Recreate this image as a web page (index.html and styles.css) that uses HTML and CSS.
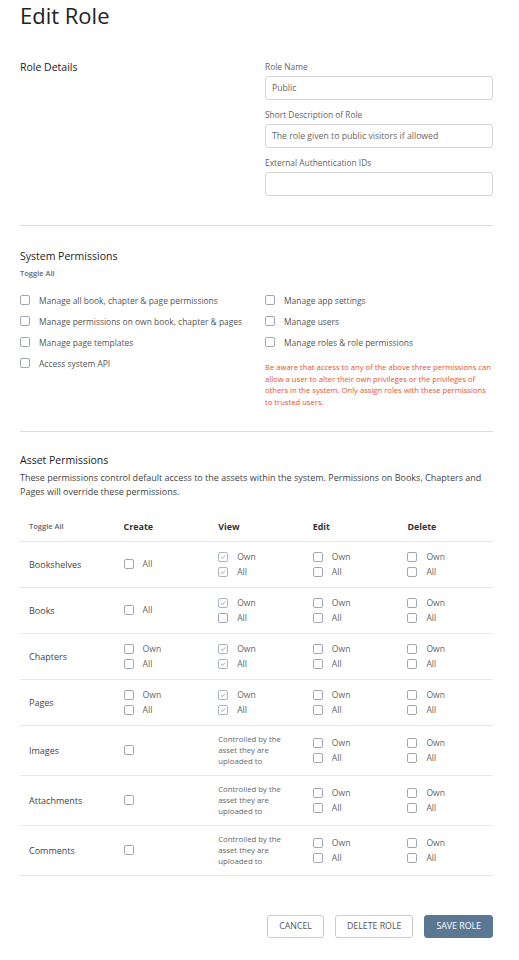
FILE: index.html
```html
<!DOCTYPE html>
<html lang="en">
<head>
<meta charset="utf-8">
<title>Edit Role</title>
<link rel="stylesheet" href="styles.css">
</head>
<body>
<main class="page">
  <h1 class="page-title">Edit Role</h1>

  <section class="two-col details">
    <div><h2 class="section-title">Role Details</h2></div>
    <div class="fields">
      <div class="field">
        <label class="field-label">Role Name</label>
        <input class="input" type="text" value="Public">
      </div>
      <div class="field">
        <label class="field-label">Short Description of Role</label>
        <input class="input" type="text" value="The role given to public visitors if allowed">
      </div>
      <div class="field">
        <label class="field-label">External Authentication IDs</label>
        <input class="input" type="text" value="">
      </div>
    </div>
  </section>

  <hr class="divider divider-first">

  <section class="system">
    <h2 class="section-title">System Permissions</h2>
    <div class="toggle-all">Toggle All</div>
    <div class="two-col sys-grid">
      <div class="sys-list">
        <div class="check sys-check"><span class="cb"></span><span>Manage all book, chapter &amp; page permissions</span></div>
        <div class="check sys-check"><span class="cb"></span><span>Manage permissions on own book, chapter &amp; pages</span></div>
        <div class="check sys-check"><span class="cb"></span><span>Manage page templates</span></div>
        <div class="check sys-check"><span class="cb"></span><span>Access system API</span></div>
      </div>
      <div class="sys-list">
        <div class="check sys-check"><span class="cb"></span><span>Manage app settings</span></div>
        <div class="check sys-check"><span class="cb"></span><span>Manage users</span></div>
        <div class="check sys-check"><span class="cb"></span><span>Manage roles &amp; role permissions</span></div>
        <p class="warning">Be aware that access to any of the above three permissions can allow a user to alter their own privileges or the privileges of others in the system. Only assign roles with these permissions to trusted users.</p>
      </div>
    </div>
  </section>

  <hr class="divider divider-second">

  <section class="assets">
    <h2 class="section-title">Asset Permissions</h2>
    <p class="assets-desc">These permissions control default access to the assets within the system. Permissions on Books, Chapters and Pages will override these permissions.</p>

    <table class="perm-table">
      <colgroup><col><col><col><col><col></colgroup>
      <thead>
        <tr>
          <th class="th-toggle">Toggle All</th>
          <th>Create</th>
          <th>View</th>
          <th>Edit</th>
          <th>Delete</th>
        </tr>
      </thead>
      <tbody>
        <tr>
          <td class="asset-name">Bookshelves</td>
          <td><div class="check"><span class="cb"></span><span>All</span></div></td>
          <td><div class="check"><span class="cb checked"><svg viewBox="0 0 10 10"><polyline points="2.3,5.2 4.2,7 7.7,3.1"/></svg></span><span>Own</span></div><div class="check"><span class="cb checked"><svg viewBox="0 0 10 10"><polyline points="2.3,5.2 4.2,7 7.7,3.1"/></svg></span><span>All</span></div></td>
          <td><div class="check"><span class="cb"></span><span>Own</span></div><div class="check"><span class="cb"></span><span>All</span></div></td>
          <td><div class="check"><span class="cb"></span><span>Own</span></div><div class="check"><span class="cb"></span><span>All</span></div></td>
        </tr>
        <tr>
          <td class="asset-name">Books</td>
          <td><div class="check"><span class="cb"></span><span>All</span></div></td>
          <td><div class="check"><span class="cb checked"><svg viewBox="0 0 10 10"><polyline points="2.3,5.2 4.2,7 7.7,3.1"/></svg></span><span>Own</span></div><div class="check"><span class="cb"></span><span>All</span></div></td>
          <td><div class="check"><span class="cb"></span><span>Own</span></div><div class="check"><span class="cb"></span><span>All</span></div></td>
          <td><div class="check"><span class="cb"></span><span>Own</span></div><div class="check"><span class="cb"></span><span>All</span></div></td>
        </tr>
        <tr>
          <td class="asset-name">Chapters</td>
          <td><div class="check"><span class="cb"></span><span>Own</span></div><div class="check"><span class="cb"></span><span>All</span></div></td>
          <td><div class="check"><span class="cb checked"><svg viewBox="0 0 10 10"><polyline points="2.3,5.2 4.2,7 7.7,3.1"/></svg></span><span>Own</span></div><div class="check"><span class="cb checked"><svg viewBox="0 0 10 10"><polyline points="2.3,5.2 4.2,7 7.7,3.1"/></svg></span><span>All</span></div></td>
          <td><div class="check"><span class="cb"></span><span>Own</span></div><div class="check"><span class="cb"></span><span>All</span></div></td>
          <td><div class="check"><span class="cb"></span><span>Own</span></div><div class="check"><span class="cb"></span><span>All</span></div></td>
        </tr>
        <tr>
          <td class="asset-name">Pages</td>
          <td><div class="check"><span class="cb"></span><span>Own</span></div><div class="check"><span class="cb"></span><span>All</span></div></td>
          <td><div class="check"><span class="cb checked"><svg viewBox="0 0 10 10"><polyline points="2.3,5.2 4.2,7 7.7,3.1"/></svg></span><span>Own</span></div><div class="check"><span class="cb checked"><svg viewBox="0 0 10 10"><polyline points="2.3,5.2 4.2,7 7.7,3.1"/></svg></span><span>All</span></div></td>
          <td><div class="check"><span class="cb"></span><span>Own</span></div><div class="check"><span class="cb"></span><span>All</span></div></td>
          <td><div class="check"><span class="cb"></span><span>Own</span></div><div class="check"><span class="cb"></span><span>All</span></div></td>
        </tr>
        <tr>
          <td class="asset-name">Images</td>
          <td><div class="check"><span class="cb"></span></div></td>
          <td class="controlled">Controlled by the asset they are uploaded to</td>
          <td><div class="check"><span class="cb"></span><span>Own</span></div><div class="check"><span class="cb"></span><span>All</span></div></td>
          <td><div class="check"><span class="cb"></span><span>Own</span></div><div class="check"><span class="cb"></span><span>All</span></div></td>
        </tr>
        <tr>
          <td class="asset-name">Attachments</td>
          <td><div class="check"><span class="cb"></span></div></td>
          <td class="controlled">Controlled by the asset they are uploaded to</td>
          <td><div class="check"><span class="cb"></span><span>Own</span></div><div class="check"><span class="cb"></span><span>All</span></div></td>
          <td><div class="check"><span class="cb"></span><span>Own</span></div><div class="check"><span class="cb"></span><span>All</span></div></td>
        </tr>
        <tr>
          <td class="asset-name">Comments</td>
          <td><div class="check"><span class="cb"></span></div></td>
          <td class="controlled">Controlled by the asset they are uploaded to</td>
          <td><div class="check"><span class="cb"></span><span>Own</span></div><div class="check"><span class="cb"></span><span>All</span></div></td>
          <td><div class="check"><span class="cb"></span><span>Own</span></div><div class="check"><span class="cb"></span><span>All</span></div></td>
        </tr>
      </tbody>
    </table>
  </section>

  <div class="actions">
    <button class="btn btn-outline" type="button">Cancel</button>
    <button class="btn btn-outline" type="button">Delete Role</button>
    <button class="btn btn-primary" type="button">Save Role</button>
  </div>
</main>
</body>
</html>
```
FILE: styles.css
```css
* { box-sizing: border-box; }

body {
  margin: 0;
  background: #ffffff;
  color: #444444;
  font-family: "Open Sans", "Noto Sans", sans-serif;
}

.page {
  padding: 0 26px 40px 20px;
}

.page-title {
  margin: 0;
  font-size: 22px;
  line-height: 30px;
  font-weight: 400;
  color: #222222;
}

.two-col {
  display: grid;
  grid-template-columns: 1fr 228px;
}

.details {
  margin-top: 30px;
}

.section-title {
  margin: 0;
  font-size: 10.5px;
  line-height: 14px;
  font-weight: 400;
  color: #222222;
}

.field {
  display: flex;
  flex-direction: column;
  margin-bottom: 8px;
}

.field:last-child {
  margin-bottom: 0;
}

.field-label {
  font-size: 8.4px;
  line-height: 13px;
  color: #666666;
  margin-bottom: 3px;
}

.input {
  height: 24px;
  width: 100%;
  border: 1px solid #d4d4d4;
  border-radius: 3px;
  padding: 0 6px;
  font-family: inherit;
  font-size: 8.7px;
  color: #666666;
  background: #ffffff;
}

.divider {
  border: 0;
  border-top: 1px solid #dddddd;
  margin: 0;
}

.divider-first {
  margin-top: 29px;
}

.divider-second {
  margin-top: 22px;
}

.system {
  padding-top: 23px;
}

.toggle-all {
  margin-top: 4.5px;
  font-size: 7.5px;
  line-height: 10px;
  font-weight: 600;
  color: #606a75;
}

.sys-grid {
  margin-top: 12px;
}

.check {
  display: flex;
  align-items: center;
  gap: 9px;
  height: 15px;
  font-size: 8.6px;
  color: #666666;
}

.sys-check {
  height: 21px;
  font-size: 8.45px;
  color: #555555;
}

.cb {
  flex: none;
  width: 10px;
  height: 10px;
  border: 1px solid #a0a9b3;
  border-radius: 2px;
  background: #ffffff;
  display: inline-flex;
}

.cb.checked {
  border-color: #adb5bd;
}

.cb svg {
  width: 8px;
  height: 8px;
  fill: none;
  stroke: #939ca6;
  stroke-width: 1.1;
}

.warning {
  margin: 9.5px 0 0;
  font-size: 7.65px;
  line-height: 11.7px;
  color: #e5532f;
}

.assets {
  padding-top: 21px;
}

.assets-desc {
  margin: 4.5px 0 0;
  font-size: 9px;
  line-height: 14px;
  color: #444444;
}

.perm-table {
  margin-top: 12px;
  width: 100%;
  table-layout: fixed;
  border-collapse: collapse;
}

.perm-table col {
  width: 20%;
}

.perm-table th {
  height: 30px;
  padding: 0 9px;
  text-align: left;
  font-size: 8.9px;
  font-weight: 700;
  color: #333333;
  border-bottom: 1px solid #e8e8e8;
  vertical-align: middle;
}

.perm-table th.th-toggle {
  font-size: 7.5px;
  font-weight: 600;
  color: #606a75;
}

.perm-table td {
  padding: 7.5px 9px;
  border-bottom: 1px solid #e8e8e8;
  vertical-align: middle;
}

.asset-name {
  font-size: 9px;
  color: #444444;
}

.perm-table td.controlled {
  padding: 8px 9px;
  font-size: 7.8px;
  line-height: 11px;
  color: #666666;
}

.actions {
  margin-top: 39px;
  display: flex;
  justify-content: flex-end;
  gap: 11px;
}

.btn {
  height: 23px;
  padding: 0 11px;
  border-radius: 3px;
  font-family: inherit;
  font-size: 8.8px;
  text-transform: uppercase;
  cursor: pointer;
}

.btn-outline {
  background: #ffffff;
  border: 1px solid #cccccc;
  color: #555555;
}

.btn-primary {
  background: #5a7894;
  border: 1px solid #5a7894;
  color: #ffffff;
}
```
